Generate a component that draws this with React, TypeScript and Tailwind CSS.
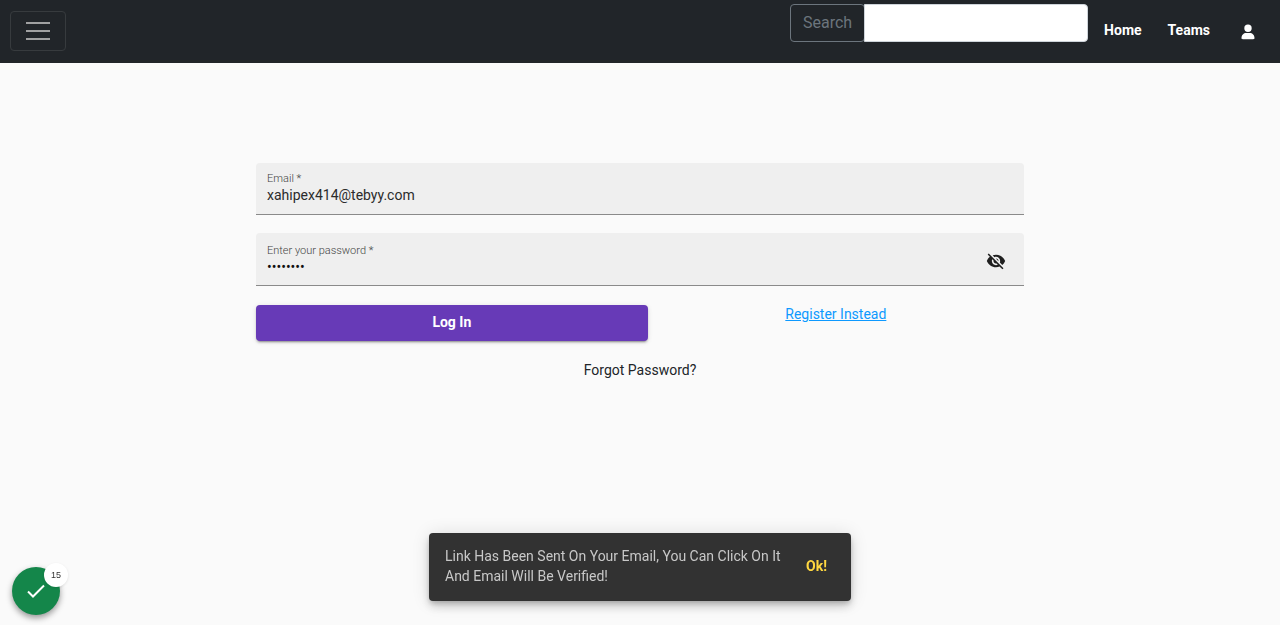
import { useState } from "react";

function NavBar() {
  return (
    <header className="flex h-[63px] items-start justify-between bg-[#212529]">
      <button
        type="button"
        aria-label="Toggle navigation"
        className="mt-[11px] ml-[10px] flex h-10 w-14 items-center justify-center rounded border border-[#373b3e]"
      >
        <svg viewBox="0 0 30 30" className="h-[30px] w-[30px]" fill="none" aria-hidden="true">
          <path d="M3 7h24M3 15h24M3 23h24" stroke="#a0a1a2" strokeWidth="2" />
        </svg>
      </button>
      <div className="flex">
        <form role="search" className="mt-1 flex h-[38px]" onSubmit={(e) => e.preventDefault()}>
          <button
            type="submit"
            className="w-[75px] rounded border border-[#6c757d] text-base font-normal text-[#6c757d]"
          >
            Search
          </button>
          <input
            type="search"
            aria-label="Search"
            className="-ml-px w-56 rounded-r border border-[#ced4da] bg-white px-3 text-base text-[#212529] outline-none"
          />
        </form>
        <nav className="flex h-[60px] items-center pr-6 pl-4 text-sm font-bold text-white">
          <a href="#home">Home</a>
          <a href="#teams" className="ml-[26px]">
            Teams
          </a>
          <a href="#account" aria-label="Account" className="mt-[3px] ml-[30px]">
            <svg viewBox="0 0 16 16" className="h-4 w-4" fill="currentColor" aria-hidden="true">
              <path d="M8 8a3.700 3.700 0 1 0 0-7.400A3.700 3.700 0 0 0 8 8Zm-6.500 6c0 .8.5 1.200 1.300 1.200h10.400c.8 0 1.300-.4 1.300-1.200 0-3-2.200-5-4.700-5H6.200C3.700 9 1.500 11 1.500 14Z" />
            </svg>
          </a>
        </nav>
      </div>
    </header>
  );
}

function LoginForm() {
  const [email, setEmail] = useState("xahipex414@tebyy.com");
  const [password, setPassword] = useState("password");
  const [visible, setVisible] = useState(false);

  return (
    <form className="mx-auto mt-[100px] w-3/5" onSubmit={(e) => e.preventDefault()}>
      <div className="flex h-[52px] flex-col rounded-t border-b border-[#8a8a8a] bg-[#efefef] px-[11px] pt-2">
        <label htmlFor="email" className="text-[11px] leading-4 font-light text-[#444]">
          Email *
        </label>
        <input
          id="email"
          type="email"
          value={email}
          onChange={(e) => setEmail(e.target.value)}
          className="h-4 bg-transparent text-sm leading-4 text-[#2b2b2b] outline-none"
        />
      </div>

      <div className="mt-[18px] flex h-[53px] items-center rounded-t border-b border-[#8a8a8a] bg-[#efefef] px-[11px]">
        <div className="flex flex-1 flex-col">
          <label htmlFor="password" className="text-[11px] leading-4 font-light text-[#444]">
            Enter your password *
          </label>
          <input
            id="password"
            type={visible ? "text" : "password"}
            value={password}
            onChange={(e) => setPassword(e.target.value)}
            className="h-4 bg-transparent text-sm leading-4 text-[#111] outline-none"
          />
        </div>
        <button
          type="button"
          aria-label="Toggle password visibility"
          onClick={() => setVisible(!visible)}
          className="mt-1 mr-[7px] text-[#1f1f1f]"
        >
          <svg viewBox="0 0 24 24" className="h-5 w-5" fill="currentColor" aria-hidden="true">
            <path d="M12 7c2.760 0 5 2.240 5 5 0 .65-.13 1.260-.36 1.830l2.920 2.920c1.510-1.260 2.700-2.890 3.430-4.750-1.730-4.390-6-7.500-11-7.500-1.400 0-2.740.25-3.980.7l2.160 2.160C10.740 7.130 11.350 7 12 7zM2 4.270l2.280 2.280.46.46C3.080 8.300 1.780 10.020 1 12c1.730 4.390 6 7.500 11 7.500 1.550 0 3.030-.3 4.380-.84l.42.42L19.730 22 21 20.730 3.270 3 2 4.270zM7.530 9.800l1.550 1.550c-.05.21-.08.43-.08.65 0 1.660 1.340 3 3 3 .22 0 .44-.03.65-.08l1.550 1.550c-.67.33-1.410.53-2.200.53-2.760 0-5-2.240-5-5 0-.79.2-1.530.53-2.200zm4.310-.78l3.150 3.150.02-.16c0-1.660-1.340-3-3-3l-.17.01z" />
          </svg>
        </button>
      </div>

      <div className="mt-[19px] flex">
        <button
          type="submit"
          className="h-9 w-[51%] rounded bg-[#673ab7] pb-0.5 text-sm font-bold text-white shadow-[0_3px_1px_-2px_rgba(0,0,0,0.2),0_2px_2px_0_rgba(0,0,0,0.14),0_1px_5px_0_rgba(0,0,0,0.12)]"
        >
          Log In
        </button>
        <div className="flex-1 text-center text-sm leading-[18px]">
          <a href="#register" className="text-[#0d99ff] underline">
            Register Instead
          </a>
        </div>
      </div>
      <div className="mt-[19px] text-center text-sm leading-5">
        <a href="#forgot" className="text-[#212529]">
          Forgot Password?
        </a>
      </div>
    </form>
  );
}

function StatusBadge() {
  return (
    <button
      type="button"
      aria-label="15 checks passed"
      className="fixed bottom-[10px] left-3 flex h-12 w-12 items-center justify-center rounded-full bg-[#14864a] shadow-[0_3px_6px_rgba(0,0,0,0.4)]"
    >
      <svg viewBox="0 0 24 24" className="h-6 w-6" fill="none" aria-hidden="true">
        <path d="M4 12.500l5 5L20 6.500" stroke="white" strokeWidth="2" />
      </svg>
      <span className="absolute -top-1 -right-2 flex h-6 w-6 items-center justify-center rounded-full bg-white pt-px font-['Liberation_Sans',sans-serif] text-[9px] text-[#333] shadow-[0_1px_3px_rgba(0,0,0,0.1)]">
        15
      </span>
    </button>
  );
}

function Snackbar() {
  return (
    <div
      role="status"
      className="fixed bottom-6 left-1/2 flex h-[68px] w-[422px] -translate-x-1/2 items-center rounded bg-[#323232] px-4 pb-0.5 text-sm leading-5 shadow-[0_3px_5px_-1px_rgba(0,0,0,0.2),0_6px_10px_0_rgba(0,0,0,0.14),0_1px_18px_0_rgba(0,0,0,0.12)]"
    >
      <p className="flex-1 text-[#c8c8c8]">
        Link Has Been Sent On Your Email, You Can Click On It And Email Will Be Verified!
      </p>
      <button type="button" className="ml-2 px-2 font-bold text-[#ffd740]">
        Ok!
      </button>
    </div>
  );
}

export default function App() {
  return (
    <div className="min-h-screen bg-[#fafafa] font-[Roboto,sans-serif]">
      <NavBar />
      <main>
        <LoginForm />
      </main>
      <Snackbar />
      <StatusBadge />
    </div>
  );
}
